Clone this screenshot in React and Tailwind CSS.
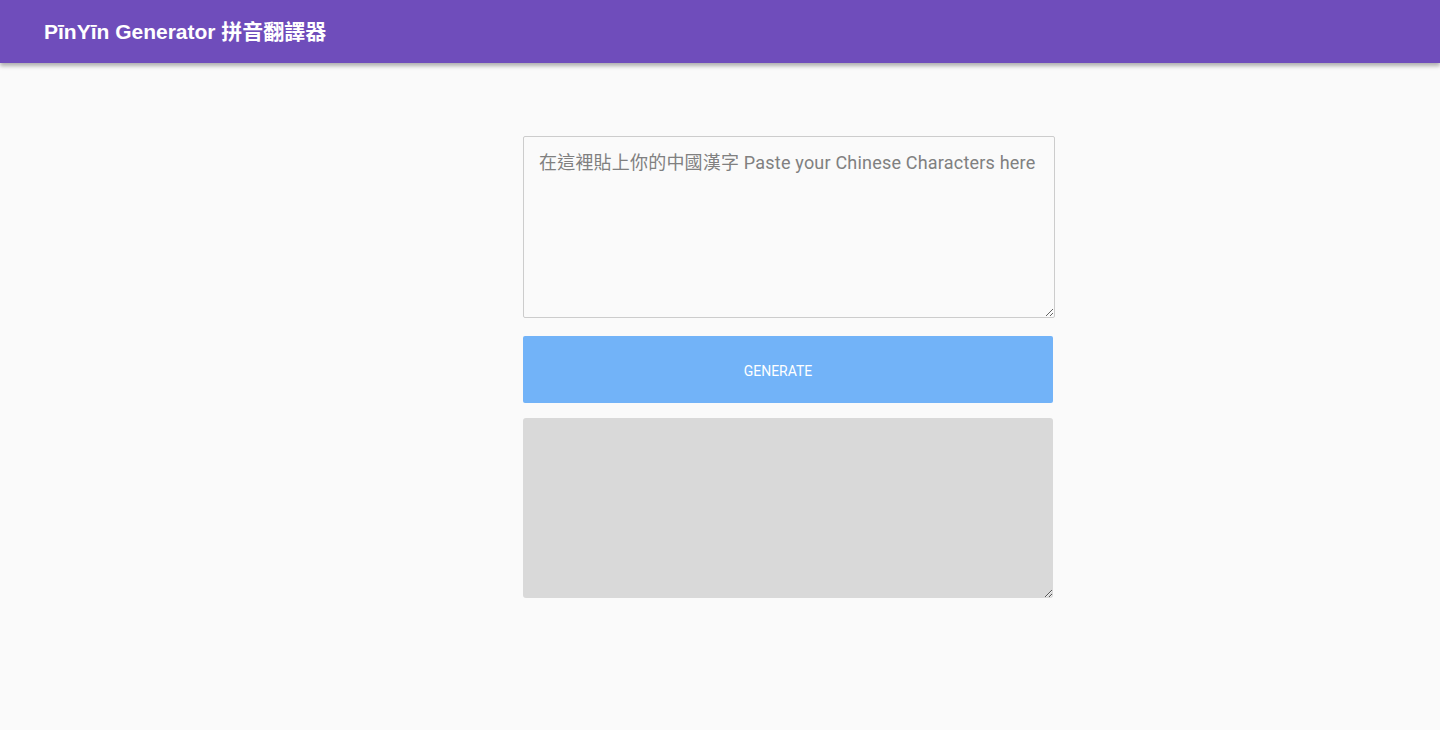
import { useState } from 'react';

const App = () => {
    const [input, setInput] = useState('');

    return (
        <div className="min-h-screen bg-[#fafafa]" style={{ fontFamily: '"Liberation Sans", "Noto Sans CJK TC", sans-serif' }}>
            <header className="h-[63px] bg-[#6f4dbb] flex items-center px-[44px] shadow-[0_3px_4px_rgba(0,0,0,0.3)]">
                <h1 className="text-[21px] font-bold text-white">PīnYīn Generator 拼音翻譯器</h1>
            </header>

            <div className="flex justify-center pl-[138px]">
                <main className="flex flex-col items-start w-[532px] pt-[73px]">
                    <textarea
                        placeholder="在這裡貼上你的中國漢字 Paste your Chinese Characters here"
                        className="w-[532px] h-[182px] bg-[#fafafa] border border-[#cccccc] rounded-[2px] px-[15px] py-[12px] text-[18px] tracking-[0.2px] text-[#333] placeholder:text-[#808080] outline-none"
                        style={{ fontFamily: 'Roboto, "Noto Sans CJK TC", sans-serif' }}
                        value={input}
                        onChange={e => setInput(e.target.value)}
                    />

                    <button
                        className="mt-[18px] w-[530px] h-[67px] pr-[20px] pt-[3px] bg-[#72b3f8] text-white text-[14px] rounded-[2px]"
                        style={{ fontFamily: 'Roboto, sans-serif' }}
                    >
                        GENERATE
                    </button>

                    <textarea
                        readOnly
                        className="mt-[15px] w-[530px] h-[180px] bg-[#d9d9d9] rounded-[3px] outline-none"
                    />
                </main>
            </div>
        </div>
    );
};

export default App;
